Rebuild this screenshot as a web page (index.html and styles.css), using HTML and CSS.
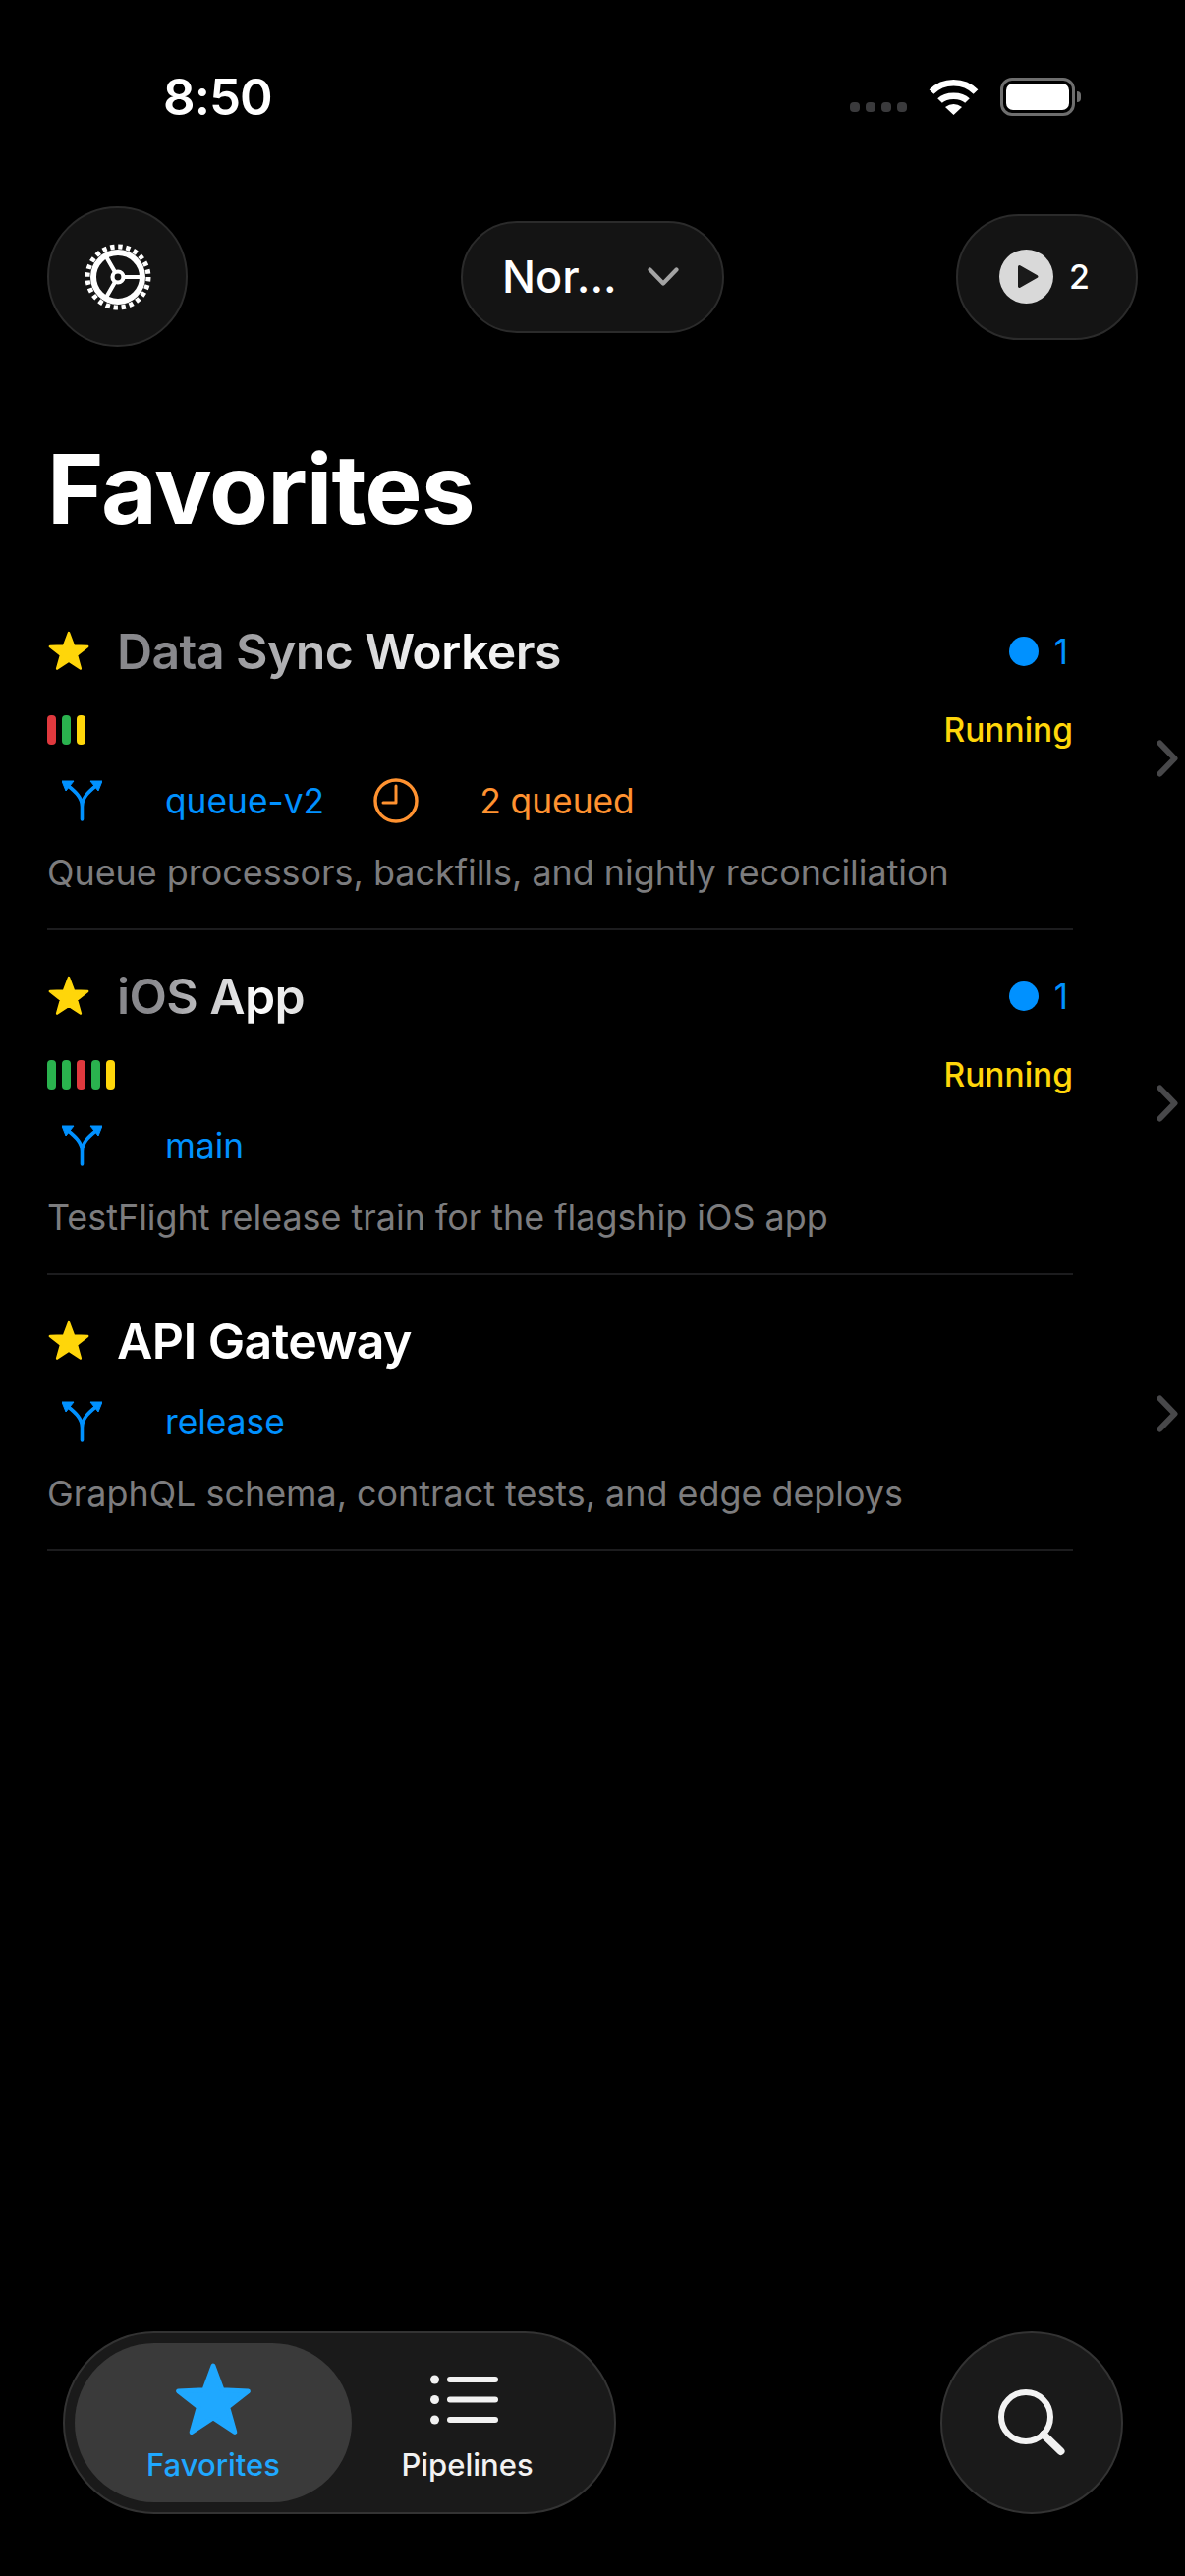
FILE: index.html
```html
<!DOCTYPE html>
<html lang="en">
<head>
    <meta charset="UTF-8">
    <meta name="viewport" content="width=device-width, initial-scale=1.0">
    <title>Favorites</title>
    <link rel="stylesheet" href="styles.css">
</head>
<body>
    <svg class="sprite">
        <symbol id="star" viewBox="0 0 100 100">
            <path d="M50 5L61.8 36.8L95.6 38.2L69 59.2L78.2 91.8L50 73L21.8 91.8L31 59.2L4.4 38.2L38.2 36.8Z" fill="currentColor" stroke="currentColor" stroke-width="6" stroke-linejoin="round"/>
        </symbol>
        <symbol id="branch" viewBox="0 0 41 42">
            <path d="M20.5 40V27C20.5 18 14 12 6.500 6M20.5 27C20.5 18 27 12 34.500 6" fill="none" stroke="currentColor" stroke-width="3.6" stroke-linecap="round"/>
            <path d="M0 1H12L4 11ZM41 1H29L37 11Z" fill="currentColor" stroke="currentColor" stroke-linejoin="round"/>
        </symbol>
        <symbol id="chevron" viewBox="0 0 22 38">
            <path d="M3.5 3.5L18.5 19L3.5 34.5" fill="none" stroke="currentColor" stroke-width="6" stroke-linecap="round" stroke-linejoin="round"/>
        </symbol>
    </svg>

    <div class="status-bar">
        <span class="time">8:50</span>
        <div class="status-icons">
            <div class="signal"><i></i><i></i><i></i><i></i></div>
            <svg class="wifi" width="51" height="37" viewBox="0 0 51 37">
                <path d="M3 13.5C15 1 36 1 48 13.5" fill="none" stroke="#fff" stroke-width="6.5"/>
                <path d="M11.5 22.5C18 16 33 16 39.5 22.5" fill="none" stroke="#fff" stroke-width="6.5"/>
                <path d="M25.5 37L17 29Q25.5 23 34 29Z" fill="#fff"/>
            </svg>
            <div class="battery"><div class="battery-fill"></div></div>
            <div class="battery-nub"></div>
        </div>
    </div>

    <div class="top-bar">
        <button class="glass-btn gear-btn">
            <svg width="68" height="68" viewBox="0 0 68 68">
                <circle cx="34" cy="34" r="31" fill="none" stroke="#fff" stroke-width="5" stroke-dasharray="4.4 3.716"/>
                <circle cx="34" cy="34" r="25" fill="none" stroke="#fff" stroke-width="6"/>
                <path d="M39 34H56M31.2 29.200L21 11.500M31.2 38.800L21 56.500" stroke="#fff" stroke-width="4.2"/>
                <circle cx="34" cy="34" r="5.5" fill="none" stroke="#fff" stroke-width="4.2"/>
            </svg>
        </button>
        <button class="glass-btn branch-pill">
            <span>Nor...</span>
            <svg width="32" height="19" viewBox="0 0 32 19">
                <path d="M2.5 2.5L16 16.5L29.500 2.5" fill="none" stroke="#a3a3a3" stroke-width="4.200" stroke-linecap="round" stroke-linejoin="round"/>
            </svg>
        </button>
        <button class="glass-btn run-pill">
            <svg width="55" height="55" viewBox="0 0 55 55">
                <circle cx="27.5" cy="27.5" r="27.5" fill="#d9d9d9"/>
                <path d="M20.500 17.500L38 27.500L20.500 37.500Z" fill="#1a1a1a" stroke="#1a1a1a" stroke-width="3" stroke-linejoin="round"/>
            </svg>
            <span>2</span>
        </button>
    </div>

    <h1>Favorites</h1>

    <main class="list">
        <div class="row">
            <div class="row-body">
                <div class="title-line">
                    <svg class="star"><use href="#star"/></svg>
                    <span class="name shimmer">Data Sync Workers</span>
                    <span class="count"><i class="dot"></i>1</span>
                </div>
                <div class="build-line">
                    <div class="bars"><i class="red"></i><i class="green"></i><i class="yellow"></i></div>
                    <span class="state">Running</span>
                </div>
                <div class="meta-line">
                    <svg class="branch-icon"><use href="#branch"/></svg>
                    <span class="branch-name">queue-v2</span>
                    <svg class="clock" width="46" height="46" viewBox="0 0 46 46">
                        <circle cx="23" cy="23" r="21" fill="none" stroke="currentColor" stroke-width="3.400"/>
                        <path d="M23 8V25H10" fill="none" stroke="currentColor" stroke-width="3" stroke-linecap="round" stroke-linejoin="round"/>
                    </svg>
                    <span class="queued">2 queued</span>
                </div>
                <p class="desc">Queue processors, backfills, and nightly reconciliation</p>
            </div>
            <svg class="chevron"><use href="#chevron"/></svg>
        </div>

        <div class="row">
            <div class="row-body">
                <div class="title-line">
                    <svg class="star"><use href="#star"/></svg>
                    <span class="name shimmer">iOS App</span>
                    <span class="count"><i class="dot"></i>1</span>
                </div>
                <div class="build-line">
                    <div class="bars"><i class="green"></i><i class="green"></i><i class="red"></i><i class="green"></i><i class="yellow"></i></div>
                    <span class="state">Running</span>
                </div>
                <div class="meta-line">
                    <svg class="branch-icon"><use href="#branch"/></svg>
                    <span class="branch-name">main</span>
                </div>
                <p class="desc">TestFlight release train for the flagship iOS app</p>
            </div>
            <svg class="chevron"><use href="#chevron"/></svg>
        </div>

        <div class="row">
            <div class="row-body">
                <div class="title-line">
                    <svg class="star"><use href="#star"/></svg>
                    <span class="name">API Gateway</span>
                </div>
                <div class="meta-line">
                    <svg class="branch-icon"><use href="#branch"/></svg>
                    <span class="branch-name">release</span>
                </div>
                <p class="desc">GraphQL schema, contract tests, and edge deploys</p>
            </div>
            <svg class="chevron"><use href="#chevron"/></svg>
        </div>
    </main>

    <div class="bottom-bar">
        <nav class="tabs">
            <div class="tab tab-active">
                <svg class="tab-star"><use href="#star"/></svg>
                <span>Favorites</span>
            </div>
            <div class="tab">
                <svg class="tab-icon" width="69" height="73" viewBox="0 0 69 73">
                    <g fill="#f2f2f2">
                        <circle cx="4.500" cy="16" r="4.500"/>
                        <circle cx="4.500" cy="36.500" r="4.500"/>
                        <circle cx="4.500" cy="57" r="4.500"/>
                        <rect x="17" y="13" width="52" height="6" rx="3"/>
                        <rect x="17" y="33.500" width="52" height="6" rx="3"/>
                        <rect x="17" y="54" width="52" height="6" rx="3"/>
                    </g>
                </svg>
                <span>Pipelines</span>
            </div>
        </nav>
        <button class="search-btn">
            <svg width="68" height="68" viewBox="0 0 68 68">
                <circle cx="28" cy="28" r="25" fill="none" stroke="#f2f2f2" stroke-width="6"/>
                <path d="M46 46L63.500 63" stroke="#f2f2f2" stroke-width="8" stroke-linecap="round"/>
            </svg>
        </button>
    </div>
</body>
</html>
```

FILE: styles.css
```css
* {
    box-sizing: border-box;
}
html, body {
    margin: 0;
    background: #000;
}
body {
    width: 1206px;
    height: 2622px;
    display: flex;
    flex-direction: column;
    overflow: hidden;
    font-family: Inter, "Liberation Sans", sans-serif;
    color: #fff;
}
.sprite {
    display: none;
}
i {
    display: block;
}

/* status bar */
.status-bar {
    height: 196px;
    flex: none;
    display: flex;
    align-items: center;
    justify-content: space-between;
    padding: 0 106px 0 166px;
}
.time {
    font-size: 51px;
    font-weight: 600;
    letter-spacing: -1px;
}
.status-icons {
    display: flex;
    align-items: center;
}
.signal {
    display: flex;
    gap: 6px;
    margin-top: 22px;
    margin-right: 22px;
}
.signal i {
    width: 10px;
    height: 10px;
    border-radius: 4px;
    background: #3a3a3c;
}
.wifi {
    margin-right: 22px;
}
.battery {
    width: 76px;
    height: 39px;
    padding: 3px;
    border: 3px solid #6e6e6e;
    border-radius: 12px;
}
.battery-fill {
    height: 100%;
    background: #fff;
    border-radius: 7px;
}
.battery-nub {
    width: 4px;
    height: 11px;
    margin-left: 2px;
    background: #6e6e6e;
    border-radius: 0 4px 4px 0;
}

/* top buttons */
.top-bar {
    margin-top: 14px;
    padding: 0 48px;
    height: 143px;
    flex: none;
    display: grid;
    grid-template-columns: 1fr auto 1fr;
    align-items: center;
}
.glass-btn {
    display: flex;
    align-items: center;
    background: #141414;
    border: 2px solid #2b2b2b;
    color: #fff;
    font-family: inherit;
    padding: 0;
}
.gear-btn {
    width: 143px;
    height: 143px;
    border-radius: 50%;
    justify-content: center;
    justify-self: start;
}
.branch-pill {
    width: 268px;
    height: 114px;
    border-radius: 57px;
    padding-left: 40px;
    gap: 31px;
    font-size: 45px;
    font-weight: 500;
}
.run-pill {
    width: 185px;
    height: 128px;
    border-radius: 64px;
    padding-left: 42px;
    gap: 16px;
    font-size: 34px;
    font-weight: 500;
    justify-self: end;
}

h1 {
    margin: 85px 0 0 48px;
    flex: none;
    font-size: 98px;
    line-height: 120px;
    font-weight: 700;
    letter-spacing: -1px;
}

/* favorites list */
.list {
    flex: 1;
    margin-top: 38px;
    padding-left: 48px;
}
.row {
    display: flex;
    align-items: center;
}
.row-body {
    width: 1044px;
    flex: none;
    padding: 37px 0 35.5px;
    display: flex;
    flex-direction: column;
    gap: 27.5px;
    border-bottom: 2px solid #1c1c1e;
}
.chevron {
    width: 22px;
    height: 38px;
    margin-left: 85px;
    color: #48484a;
}
.title-line {
    height: 60px;
    display: flex;
    align-items: center;
}
.title-line + .meta-line {
    margin-top: 1.5px;
}
.star {
    width: 42px;
    height: 42px;
    color: #ffd60a;
    margin-left: 1px;
    margin-right: 28px;
}
.name {
    font-size: 50px;
    line-height: 60px;
    font-weight: 600;
    letter-spacing: -0.6px;
}
.shimmer {
    color: transparent;
    background: linear-gradient(90deg, #88888c 0%, #88888c 18%, #ffffff 76%, #dcdcdc 100%);
    -webkit-background-clip: text;
    background-clip: text;
}
.count {
    margin-left: auto;
    margin-right: 5px;
    display: flex;
    align-items: center;
    gap: 16px;
    font-size: 35px;
    color: #0091ff;
}
.dot {
    width: 30px;
    height: 30px;
    border-radius: 50%;
    background: #0091ff;
}
.build-line {
    height: 44px;
    display: flex;
    align-items: center;
    justify-content: space-between;
}
.bars {
    display: flex;
    gap: 6px;
}
.bars i {
    width: 9px;
    height: 30px;
    border-radius: 4px;
}
.red {
    background: #e0393e;
}
.green {
    background: #2ab24e;
}
.yellow {
    background: #ffd60a;
}
.state {
    font-size: 33.5px;
    font-weight: 500;
    color: #ffd60a;
}
.meta-line {
    height: 46px;
    display: flex;
    align-items: center;
    font-size: 35.3px;
}
.branch-icon {
    width: 41px;
    height: 42px;
    margin-left: 15px;
    color: #0091ff;
}
.branch-name {
    margin-left: 64px;
    color: #0091ff;
}
.clock {
    margin-left: 50px;
    color: #ff9230;
}
.queued {
    margin-left: 62px;
    color: #ff9230;
}
.desc {
    margin: 0;
    height: 44px;
    font-size: 35.9px;
    line-height: 44px;
    color: #7c7c7e;
}

/* bottom tabs */
.bottom-bar {
    flex: none;
    height: 186px;
    margin-bottom: 63px;
    padding: 0 63px 0 64px;
    display: flex;
    align-items: center;
    justify-content: space-between;
}
.tabs {
    width: 563px;
    height: 186px;
    padding: 10px 32px 10px 10px;
    display: flex;
    background: #1a1a1a;
    border: 2px solid #333;
    border-radius: 93px;
}
.tab {
    flex: 1;
    height: 162px;
    padding-top: 21px;
    display: flex;
    flex-direction: column;
    align-items: center;
    gap: 12px;
    font-size: 31px;
    line-height: 36px;
    font-weight: 500;
    color: #f2f2f2;
}
.tab-active {
    flex: none;
    width: 282px;
    background: #3a3a3a;
    border-radius: 81px;
    color: #1fa8ff;
}
.tab-icon {
    width: 69px;
    height: 73px;
    display: block;
    margin-left: -6px;
}
.tab-star {
    width: 78px;
    height: 78px;
    margin: -2px 0 -3px;
    display: block;
}
.search-btn {
    width: 186px;
    height: 186px;
    padding: 0;
    display: flex;
    align-items: center;
    justify-content: center;
    background: #1a1a1a;
    border: 2px solid #333;
    border-radius: 50%;
}
```
